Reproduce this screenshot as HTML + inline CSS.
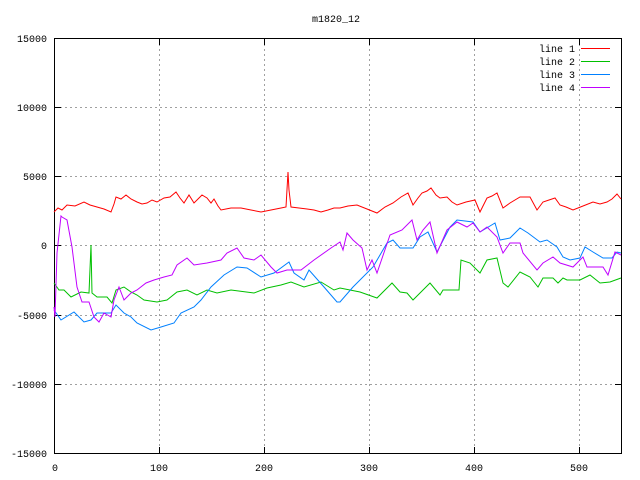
<!DOCTYPE html>
<html><head><meta charset="utf-8"><style>
html,body{margin:0;padding:0;background:#fff;}
svg{display:block;}
text{font-family:"Liberation Mono",monospace;font-size:10px;fill:#000;}
</style></head><body>
<svg width="640" height="480" viewBox="0 0 640 480" xmlns="http://www.w3.org/2000/svg">
<rect width="640" height="480" fill="#fff"/>
<g stroke="#a0a0a0" stroke-width="1" stroke-dasharray="2,3" fill="none">
<path d="M55 107.5H621M55 176.5H621M55 245.5H621M55 315.5H621M55 384.5H621"/>
<path d="M159.5 39V453M264.5 39V453M369.5 39V453M474.5 39V453M579.5 39V453"/>
</g>
<g stroke="#000" stroke-width="1" fill="none">
<path d="M54.5 38.5H621.5V453.5H54.5Z"/>
<path d="M55 38.5h6M55 107.5h6M55 176.5h6M55 245.5h6M55 315.5h6M55 384.5h6M55 453.5h6"/>
<path d="M621 38.5h-6M621 107.5h-6M621 176.5h-6M621 245.5h-6M621 315.5h-6M621 384.5h-6M621 453.5h-6"/>
<path d="M54.5 453v-6M159.5 453v-6M264.5 453v-6M369.5 453v-6M474.5 453v-6M579.5 453v-6"/>
<path d="M54.5 39v6M159.5 39v6M264.5 39v6M369.5 39v6M474.5 39v6M579.5 39v6"/>
</g>
<text x="336" y="22" text-anchor="middle">m1820_12</text>
<g text-anchor="end">
<text x="47" y="42">15000</text><text x="47" y="111">10000</text><text x="47" y="180">5000</text>
<text x="47" y="249">0</text><text x="47" y="319">-5000</text><text x="47" y="388">-10000</text><text x="47" y="457">-15000</text>
</g>
<g text-anchor="middle">
<text x="55" y="471">0</text><text x="159" y="471">100</text><text x="264" y="471">200</text>
<text x="369" y="471">300</text><text x="474" y="471">400</text><text x="579" y="471">500</text>
</g>
<g text-anchor="end">
<text x="575" y="52">line 1</text><text x="575" y="65">line 2</text>
<text x="575" y="78">line 3</text><text x="575" y="91">line 4</text>
</g>
<g fill="none" stroke-width="1">
<path stroke="#ff0000" d="M581 48.5h29"/>
<path stroke="#00c000" d="M581 61.5h29"/>
<path stroke="#0080ff" d="M581 74.5h29"/>
<path stroke="#c000ff" d="M581 87.5h29"/>
<polyline stroke="#00c000" points="54,283 59,290 64,290 71,297 81,292 89,293 91,245 92,293 97,297 107,297 112,303 116,290 124,287 131,292 137,295 144,300 157,302 167,300 177,292 187,290 197,295 207,290 217,293 231,290 254,293 267,288 281,285 291,282 304,287 321,282 334,290 340,288 360,292 377,298 392,283 400,292 407,293 413,300 430,283 440,295 443,290 459,290 461,260 470,263 480,273 487,260 497,258 503,283 508,287 520,272 530,277 538,287 543,278 553,278 558,283 563,278 567,280 580,280 590,275 600,283 610,282 621,278"/>
<polyline stroke="#0080ff" points="54,310 61,320 74,312 84,322 91,320 97,313 111,313 116,305 124,313 131,317 137,323 151,330 161,327 174,323 181,313 194,307 201,300 211,287 224,275 237,267 247,268 261,277 274,273 289,262 294,273 304,280 309,270 324,287 337,302 340,302 353,287 373,267 387,243 393,240 400,248 413,248 420,237 428,232 437,252 450,227 457,220 473,222 480,232 495,223 500,240 510,238 520,228 528,233 540,242 547,240 557,247 563,257 570,260 580,258 585,247 593,252 603,258 612,258 617,252 621,253"/>
<polyline stroke="#c000ff" points="54,307 55,317 57,253 61,216 62,217 67,220 72,247 77,287 82,302 89,302 94,317 99,322 104,313 111,317 114,300 119,287 124,300 131,293 137,290 146,283 154,280 164,277 172,275 177,265 187,258 194,265 207,263 221,260 227,253 237,248 244,258 254,260 261,255 271,267 277,273 287,270 301,270 314,260 331,248 340,242 343,250 347,233 353,240 362,248 367,270 372,260 377,273 390,235 402,230 412,220 417,240 423,230 430,222 437,253 447,230 457,222 467,227 473,223 480,232 487,227 497,237 503,253 510,243 520,243 523,253 537,270 543,263 553,257 560,263 573,267 583,257 587,267 603,267 608,275 615,252 621,255"/>
<polyline stroke="#ff0000" points="54,212 58,208 62,210 67,205 75,206 84,202 90,205 97,207 104,209 111,212 114,204 116,197 121,199 126,195 131,199 137,202 142,204 147,203 152,200 157,202 164,198 170,197 176,192 180,198 184,203 189,195 194,203 198,199 202,195 207,198 211,203 214,199 218,206 221,210 231,208 241,208 251,210 261,212 271,210 281,208 286,207 288,172 289,190 291,207 299,208 307,209 314,210 321,212 328,210 334,208 340,208 348,206 357,205 367,209 377,213 385,207 393,203 401,197 408,193 413,205 418,198 422,193 427,191 431,188 436,195 440,198 447,197 452,202 457,205 466,202 475,200 480,212 484,204 487,198 492,196 497,193 503,208 510,203 520,197 530,197 537,210 543,202 549,200 555,198 560,205 566,207 573,210 583,206 593,202 600,204 607,202 612,199 617,194 621,199"/>
</g>
</svg>
</body></html>
